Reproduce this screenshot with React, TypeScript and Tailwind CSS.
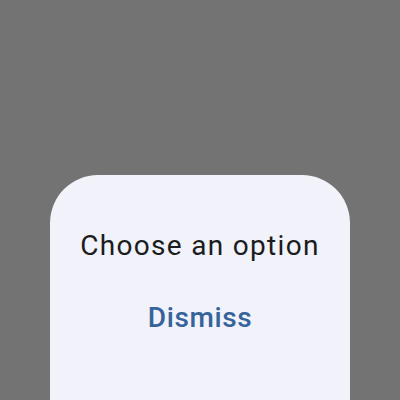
export default function App() {
  return (
    <div className="h-[400px] w-[400px] overflow-hidden bg-[#737373] flex flex-col justify-end items-center font-['Roboto',sans-serif]">
      <div className="w-[300px] h-[225px] rounded-t-[48px] bg-[#f1f2fa] flex flex-col items-center pt-[55px]">
        <p className="text-[28px] leading-[32px] tracking-[1.3px] text-[#1b1c20]">Choose an option</p>
        <button className="mt-[40px] text-[28px] leading-[32px] tracking-[0.6px] font-medium text-[#35639a]">Dismiss</button>
      </div>
    </div>
  );
}
